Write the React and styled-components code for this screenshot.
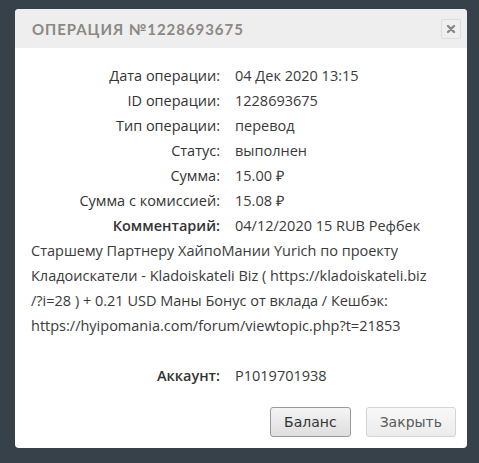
import React from 'react';
import styled, { createGlobalStyle } from 'styled-components';

const GlobalStyle = createGlobalStyle`
  html, body {
    margin: 0;
    padding: 0;
    background: #36414a;
  }
  body {
    width: 479px;
    height: 463px;
    overflow: hidden;
  }
`;

const Overlay = styled.div`
  padding: 9px 12px 0 15px;
`;

const Dialog = styled.div`
  width: 452px;
  height: 439px;
  background: #fff;
  border-radius: 4px;
  overflow: hidden;
  display: flex;
  flex-direction: column;
`;

const Header = styled.div`
  height: 39px;
  background: #eeeeee;
  display: flex;
  align-items: center;
  justify-content: space-between;
  padding: 0 6px 0 17px;
`;

const Title = styled.h2`
  margin: 0;
  font-family: Lato, "Open Sans", sans-serif;
  font-weight: 700;
  font-size: 15px;
  letter-spacing: 0.95px;
  color: #8b8883;
  text-transform: uppercase;
`;

const CloseButton = styled.button`
  width: 20px;
  height: 20px;
  padding: 0;
  border: 1px solid #dcdcdc;
  border-radius: 2px;
  background: #efefef;
  display: flex;
  align-items: center;
  justify-content: center;
  cursor: pointer;
`;

const Body = styled.div`
  flex: 1;
  padding: 15px 10px 0 16px;
  font-family: "Open Sans", sans-serif;
  font-size: 14.5px;
  line-height: 25px;
  color: #333;
`;

const Row = styled.div`
  min-height: 25px;
  white-space: nowrap;
`;

const Label = styled.span`
  display: inline-block;
  width: 189px;
  text-align: right;
  margin-right: 15px;
  color: #333;
  font-weight: ${(p) => (p.$strong ? 600 : 400)};
`;

const Value = styled.span`
  color: #3a3a3a;
`;

const Spacer = styled.div`
  height: 25px;
`;

const Footer = styled.div`
  display: flex;
  justify-content: flex-end;
  gap: 15px;
  padding: 0 11px 11px 0;
`;

const Button = styled.button`
  height: 30px;
  padding: 0 13px;
  border-radius: 3px;
  font-family: "DejaVu Sans", Verdana, sans-serif;
  font-size: 14px;
  cursor: pointer;
  border: 1px solid ${(p) => (p.$primary ? '#9a9a9a' : '#d4d4d4')};
  color: ${(p) => (p.$primary ? '#333' : '#5a5a5a')};
  background: ${(p) =>
    p.$primary
      ? 'linear-gradient(#f4f4f4, #dedede)'
      : 'linear-gradient(#f8f8f8, #ececec)'};
`;

const rows = [
  ['Дата операции:', '04 Дек 2020 13:15'],
  ['ID операции:', '1228693675'],
  ['Тип операции:', 'перевод'],
  ['Статус:', 'выполнен'],
  ['Сумма:', '15.00 ₽'],
  ['Сумма с комиссией:', '15.08 ₽'],
];

// line breaks follow the original dialog's wrapping
const commentLines = [
  '04/12/2020 15 RUB Рефбек',
  'Старшему Партнеру ХайпоМании Yurich по проекту',
  'Кладоискатели - Kladoiskateli Biz ( https://kladoiskateli.biz',
  '/?i=28 ) + 0.21 USD Маны Бонус от вклада / Кешбэк:',
  'https://hyipomania.com/forum/viewtopic.php?t=21853',
];

export default function App() {
  return (
    <>
      <GlobalStyle />
      <Overlay>
        <Dialog>
          <Header>
            <Title>Операция №1228693675</Title>
            <CloseButton aria-label="close">
              <svg width="10" height="10" viewBox="0 0 10 10">
                <path d="M2 2 L8 8 M8 2 L2 8" stroke="#888" strokeWidth="2.4" strokeLinecap="round" />
              </svg>
            </CloseButton>
          </Header>
          <Body>
            {rows.map(([l, v]) => (
              <Row key={l}>
                <Label>{l}</Label>
                <Value>{v}</Value>
              </Row>
            ))}
            <Row>
              <Label $strong>Комментарий:</Label>
              <Value>{commentLines[0]}</Value>
            </Row>
            {commentLines.slice(1).map((line) => (
              <Row key={line}>
                <Value>{line}</Value>
              </Row>
            ))}
            <Spacer />
            <Row>
              <Label $strong>Аккаунт:</Label>
              <Value>P1019701938</Value>
            </Row>
          </Body>
          <Footer>
            <Button $primary>Баланс</Button>
            <Button>Закрыть</Button>
          </Footer>
        </Dialog>
      </Overlay>
    </>
  );
}
